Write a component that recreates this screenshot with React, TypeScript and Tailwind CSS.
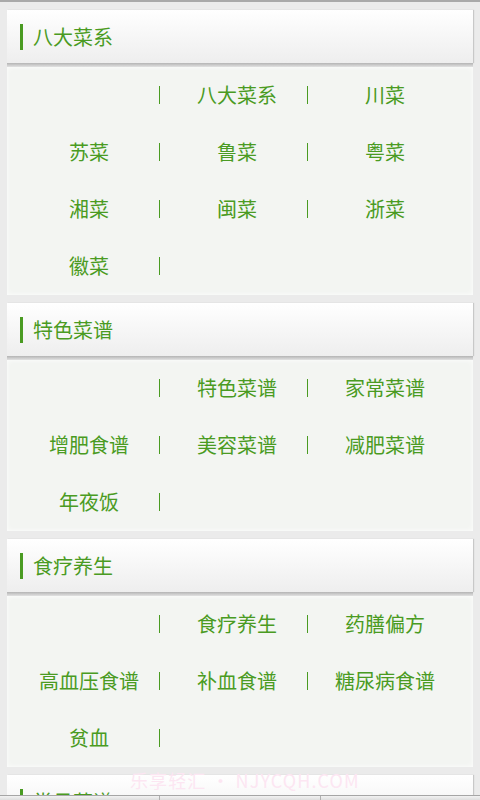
import React from "react";

const SECTIONS = [
  {
    title: "八大菜系",
    items: ["", "八大菜系", "川菜", "苏菜", "鲁菜", "粤菜", "湘菜", "闽菜", "浙菜", "徽菜"],
  },
  {
    title: "特色菜谱",
    items: ["", "特色菜谱", "家常菜谱", "增肥食谱", "美容菜谱", "减肥菜谱", "年夜饭"],
  },
  {
    title: "食疗养生",
    items: ["", "食疗养生", "药膳偏方", "高血压食谱", "补血食谱", "糖尿病食谱", "贫血"],
  },
  {
    title: "常见菜谱",
    items: [] as string[],
  },
];

const font = { fontFamily: '"Noto Sans CJK SC", "Noto Sans", sans-serif' };

function Header({ title }: { title: string }) {
  return (
    <div className="mx-[7px] h-[57px] flex flex-col">
      <div className="h-[53px] flex items-center bg-gradient-to-b from-white to-[#eeeeee] shadow-[1px_0_1px_rgba(0,0,0,0.15)]">
        <span className="ml-[13px] w-[3px] h-[26px] bg-[#4a9b22]" />
        <span className="ml-[10px] text-[20px] text-[#4a9b22] leading-none">{title}</span>
      </div>
      <div className="h-[4px] bg-gradient-to-b from-[#b4b4b4] to-[#e2e2e2]" />
    </div>
  );
}

function Cell({ text, last }: { text: string; last: boolean }) {
  return (
    <>
      <div className="h-[57px] pb-[2px] flex items-center justify-center text-[20px] text-[#4a9b22] whitespace-nowrap">
        {text}
      </div>
      {!last && (
        <div className="h-[57px] pb-[2px] flex items-center">
          <span className="ml-[-1px] w-px h-[18px] bg-[#4a9b22]" />
        </div>
      )}
    </>
  );
}

function Section({ title, items }: { title: string; items: string[] }) {
  return (
    <div className="mb-[8px]">
      <Header title={title} />
      {items.length > 0 && (
        <div className="mx-[7px] bg-[#f3f5f2] shadow-[inset_0_0_5px_rgba(255,255,255,0.9)]">
          <div className="ml-[11px] grid grid-cols-[142px_6px_142px_6px_142px]">
            {items.map((t, i) => (
              <Cell key={i} text={t} last={i % 3 === 2} />
            ))}
          </div>
        </div>
      )}
    </div>
  );
}

export default function App() {
  return (
    <div className="relative w-[480px] h-[800px] overflow-hidden bg-[#ebebeb]" style={font}>
      <div className="h-[2px] bg-[#a9a9a9]" />
      <div className="pt-[8px]">
        {SECTIONS.map((s) => (
          <Section key={s.title} title={s.title} items={s.items} />
        ))}
      </div>

      {/* watermark */}
      <div className="absolute left-[130px] top-[767px] text-[18px] text-[#fce6f2] tracking-[0.06em] whitespace-nowrap">
        乐享轻汇 • NJYCQH.COM
      </div>

      {/* bottom tab bar, mostly off screen */}
      <div className="absolute left-0 right-0 bottom-0 h-[5px] flex bg-[#dcdcdc] border-t border-[#a6a6a6]">
        <div className="flex-1 border-r border-[#b0b0b0] bg-gradient-to-b from-[#f2f2f2] to-[#dedede]" />
        <div className="flex-1 border-r border-[#b0b0b0] bg-gradient-to-b from-[#f2f2f2] to-[#dedede]" />
        <div className="flex-1 bg-gradient-to-b from-[#f2f2f2] to-[#dedede]" />
      </div>
    </div>
  );
}
